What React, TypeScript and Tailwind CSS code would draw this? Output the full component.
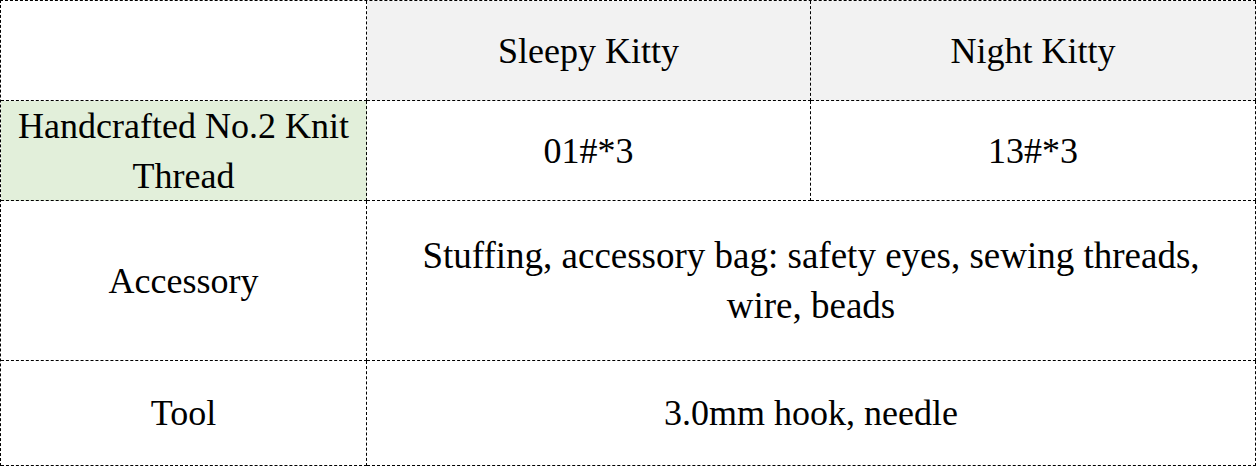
const cell =
  "flex items-center justify-center text-center border-r border-b border-dashed border-black px-2";

export default function App() {
  return (
    <div
      className="w-[1256px] bg-white text-black text-[36px] leading-[50px]"
      style={{ fontFamily: '"Liberation Serif", "Times New Roman", serif' }}
    >
      <div className="grid grid-cols-[366px_444px_445px] grid-rows-[100px_100px_160px_105px] border-l border-t border-dashed border-black">
        {/* header */}
        <div className={`${cell} bg-white`}></div>
        <div className={`${cell} bg-[#f2f2f2]`}>Sleepy Kitty</div>
        <div className={`${cell} bg-[#f2f2f2]`}>Night Kitty</div>

        {/* thread */}
        <div className={`${cell} bg-[#e2efda] px-0`}>
          <span>
            Handcrafted No.2 Knit
            <br />
            Thread
          </span>
        </div>
        <div className={cell}>01#*3</div>
        <div className={cell}>13#*3</div>

        {/* accessory */}
        <div className={cell}>Accessory</div>
        <div className={`${cell} col-span-2 text-[37px]`}>
          <span>
            Stuffing, accessory bag: safety eyes, sewing threads,
            <br />
            wire, beads
          </span>
        </div>

        {/* tool */}
        <div className={cell}>Tool</div>
        <div className={`${cell} col-span-2`}>3.0mm hook, needle</div>
      </div>
    </div>
  );
}
